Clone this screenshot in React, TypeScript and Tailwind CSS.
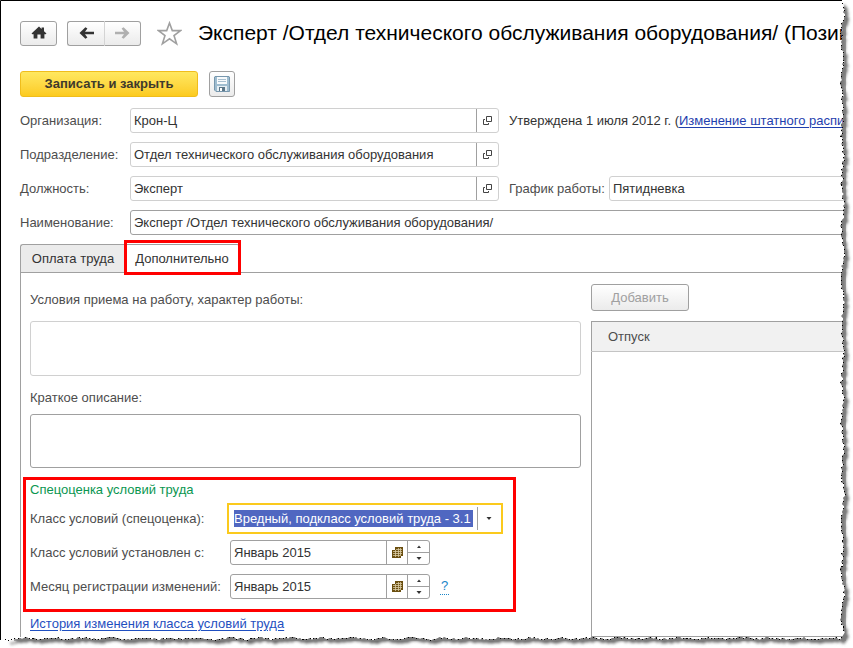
import React, { useState } from "react";

const FIELD = "flex h-[25px] overflow-hidden rounded-[3px] border bg-white";
const INPUT = "h-full w-full min-w-0 flex-1 px-[3px] text-[#333] outline-none";
const GRAY_BUTTON =
  "flex items-center justify-center border border-[#a0a0a0] bg-linear-to-b from-white to-[#ebebeb]";

function HomeIcon() {
  return (
    <svg width="16" height="14" viewBox="0 0 16 14" fill="#333">
      <path d="M8 0.5 L10.6 3 V1.5 H13 V5.2 L15.5 7.6 L14.6 8.3 H13.4 V12.5 H9.6 V8.4 H6.4 V12.5 H2.6 V8.3 H1.4 L0.5 7.6 Z" />
    </svg>
  );
}

function ArrowIcon({ right, color }: { right?: boolean; color: string }) {
  return (
    <svg width="15" height="12" viewBox="0 0 15 12" fill={color}>
      {right ? (
        <path d="M0 4.7 H9 L6.6 1.5 L8.6 0.3 L14.5 6 L8.6 11.7 L6.6 10.5 L9 7.3 H0 Z" />
      ) : (
        <path d="M15 4.7 H6 L8.4 1.5 L6.4 0.3 L0.5 6 L6.4 11.7 L8.4 10.5 L6 7.3 H15 Z" />
      )}
    </svg>
  );
}

function StarIcon() {
  return (
    <svg width="25" height="25" viewBox="0 0 25 25" fill="none" stroke="#a0a0a0" strokeWidth="1.6">
      <path d="M12.5 2 L15.3 9.6 H23.5 L17 14.6 L19.6 22.8 L12.5 17.8 L5.4 22.8 L8 14.6 L1.5 9.6 H9.7 Z" />
    </svg>
  );
}

function SaveIcon() {
  return (
    <svg width="16" height="16" viewBox="0 0 16 16">
      <path d="M1 0.5 H15 L15.5 1 V15.5 H2 L0.5 14 V1 Z" fill="#9fbdd0" stroke="#7797ad" />
      <rect x="3" y="1" width="10" height="7" fill="#f7fafc" />
      <path d="M4 3.5 H12 M4 5.5 H12" stroke="#a9c0d0" />
      <rect x="3" y="10" width="10" height="5" fill="#e6eef3" />
      <rect x="5" y="11" width="6" height="4" fill="#5b7688" />
      <rect x="6" y="12" width="2" height="3" fill="#fff" />
    </svg>
  );
}

function OpenIcon() {
  return (
    <svg width="9" height="9" viewBox="0 0 9 9" fill="none" stroke="#444">
      <path d="M3.5 0.5 H8.5 V5.5 H3.5 Z" />
      <path d="M2 3.5 H0.5 V8.5 H5.5 V7" />
    </svg>
  );
}

function CalendarIcon() {
  return (
    <svg width="11" height="12" viewBox="0 0 11 12">
      <path d="M3 0 H11 V9 H9 V11 H0 V3 H3 Z" fill="#6b4f10" />
      <path
        d="M4 2.5 H10 M1 4.5 H10 M1 6.5 H10 M1 8.5 H8 M3.5 3 V10 M6.5 1 V10 M8.5 1 V9"
        stroke="#d9cba5"
        strokeWidth="0.8"
      />
    </svg>
  );
}

function Triangle({ up }: { up?: boolean }) {
  return (
    <svg width="6" height="3" viewBox="0 0 6 3" fill="#333">
      <path d={up ? "M1 3 L3 0.5 L5 3 Z" : "M0.5 0 L3 3 L5.5 0 Z"} />
    </svg>
  );
}

interface RowProps {
  id: string;
  label: string;
  initial: string;
  children?: React.ReactNode;
}

function LookupRow({ id, label, initial, children }: RowProps) {
  const [value, setValue] = useState(initial);
  return (
    <div className="flex items-center">
      <label htmlFor={id} className="w-[110px] shrink-0">
        {label}
      </label>
      <div className={`${FIELD} min-w-0 flex-[368_1_0%] border-[#d0d0d0]`}>
        <input id={id} className={INPUT} value={value} onChange={(e) => setValue(e.target.value)} />
        <button
          type="button"
          aria-label="Открыть"
          className="flex w-[22px] items-center justify-center border-l border-[#a0a0a0]"
        >
          <OpenIcon />
        </button>
      </div>
      <div className="ml-[10px] flex min-w-0 flex-[345_1_0%] items-center whitespace-nowrap">
        {children}
      </div>
    </div>
  );
}

function MonthRow({ id, label, initial, children }: RowProps) {
  const [value, setValue] = useState(initial);
  return (
    <div className="flex items-center">
      <label htmlFor={id} className="w-[200px] shrink-0">
        {label}
      </label>
      <div className={`${FIELD} w-[200px] border-[#a0a0a0]`}>
        <input id={id} className={INPUT} value={value} onChange={(e) => setValue(e.target.value)} />
        <button
          type="button"
          aria-label="Выбрать месяц"
          className="flex w-[21px] items-center justify-center border-l border-[#a0a0a0]"
        >
          <CalendarIcon />
        </button>
        <div className="flex w-[22px] flex-col border-l border-[#a0a0a0]">
          <button type="button" aria-label="Больше" className="flex flex-1 items-center justify-center">
            <Triangle up />
          </button>
          <button
            type="button"
            aria-label="Меньше"
            className="flex flex-1 items-center justify-center border-t border-[#a0a0a0]"
          >
            <Triangle />
          </button>
        </div>
      </div>
      {children}
    </div>
  );
}

// repeatable noise in 0..1
function noise(n: number) {
  const v = Math.sin(n * 12.9898) * 43758.5453;
  return v - Math.floor(v);
}

// ragged paper edge: right side going down, then the bottom going left
function tornPoints() {
  const points: string[] = [];
  for (let y = 0; y < 636; y += 2) {
    const x = 842.5 + Math.sin(y * 0.13) * 1.2 + (noise(y) - 0.5) * 3;
    points.push(`${Math.round(x)},${y}`);
  }
  for (let x = 840; x > 2; x -= 2) {
    const y = 638.6 + Math.sin(x * 0.21) * 0.8 + (noise(x + 900) - 0.5) * 2.4;
    points.push(`${x},${Math.round(y)}`);
  }
  return points.join(" ");
}

function PaperFrame() {
  const edge = tornPoints();
  const outside = `${edge} 0,640 0,648 853,648 853,0`;
  return (
    <svg
      className="pointer-events-none absolute inset-0 h-full w-full"
      viewBox="0 0 853 648"
      preserveAspectRatio="none"
      aria-hidden="true"
    >
      <defs>
        <clipPath id="outside">
          <polygon points={outside} />
        </clipPath>
        <filter id="soft" x="-5%" y="-5%" width="110%" height="110%">
          <feGaussianBlur stdDeviation="1.6" />
        </filter>
      </defs>
      <polygon points={outside} fill="#fff" />
      <g clipPath="url(#outside)">
        <polygon
          points={`830,11 ${edge} 12,638 12,620 830,620`}
          transform="translate(4 4)"
          fill="#6c6c6c"
          filter="url(#soft)"
        />
        <path d="M842 10 H846 V641 H14 V634 H842 Z" fill="#808080" opacity="0.7" />
      </g>
      <polyline
        points={edge}
        fill="none"
        stroke="#000"
        strokeDasharray="1 3"
        shapeRendering="crispEdges"
      />
      <path d="M0.5 640 V0.5 H842" fill="none" stroke="#000" />
    </svg>
  );
}

export default function App() {
  const [name, setName] = useState("Эксперт /Отдел технического обслуживания оборудования/");
  const [schedule, setSchedule] = useState("Пятидневка");

  return (
    <div className="relative min-h-screen overflow-hidden bg-white pt-5 pl-5 font-['Liberation_Sans',Arial,sans-serif] text-[13px] leading-4 text-[#4d4d4d]">
      <header className="flex h-[26px] items-center">
        <button type="button" aria-label="Домой" className={`${GRAY_BUTTON} h-[25px] w-[37px] shrink-0 rounded-[3px]`}>
          <HomeIcon />
        </button>
        <div className="ml-[10px] flex shrink-0">
          <button type="button" aria-label="Назад" className={`${GRAY_BUTTON} h-[25px] w-[37px] rounded-l-[3px] border-r-0`}>
            <ArrowIcon color="#333" />
          </button>
          <button type="button" aria-label="Вперед" className={`${GRAY_BUTTON} h-[25px] w-[37px] rounded-r-[3px] border-l-[#d4d4d4]`}>
            <ArrowIcon right color="#b0b0b0" />
          </button>
        </div>
        <button type="button" aria-label="В избранное" className="ml-4 shrink-0">
          <StarIcon />
        </button>
        <h1 className="ml-4 text-[21px] leading-6 whitespace-nowrap text-black">
          Эксперт /Отдел технического обслуживания оборудования/ (Позиц
        </h1>
      </header>

      <div className="mt-[25px] flex">
        <button
          type="button"
          className="h-[26px] w-[178px] rounded-[3px] border border-[#f0bd1c] bg-linear-to-b from-[#ffe85f] to-[#fccb1d] font-bold text-[#3f3a2c]"
        >
          Записать и закрыть
        </button>
        <button type="button" aria-label="Записать" className={`${GRAY_BUTTON} ml-[11px] h-[26px] w-[26px] rounded-[3px]`}>
          <SaveIcon />
        </button>
      </div>

      <div className="mt-[11px] flex flex-col gap-[9px]">
        <LookupRow id="org" label="Организация:" initial="Крон-Ц">
          <span className="text-[#333]">
            Утверждена 1 июля 2012 г. (
            <a href="#history" className="text-[#1f3fae] underline underline-offset-2">
              Изменение штатного распи
            </a>
          </span>
        </LookupRow>
        <LookupRow id="dept" label="Подразделение:" initial="Отдел технического обслуживания оборудования" />
        <LookupRow id="post" label="Должность:" initial="Эксперт">
          <label htmlFor="schedule" className="w-[100px] shrink-0">
            График работы:
          </label>
          <div className={`${FIELD} flex-1 border-[#d0d0d0]`}>
            <input id="schedule" className={INPUT} value={schedule} onChange={(e) => setSchedule(e.target.value)} />
          </div>
        </LookupRow>
        <div className="flex items-center">
          <label htmlFor="name" className="w-[110px] shrink-0">
            Наименование:
          </label>
          <div className={`${FIELD} flex-1 border-[#a0a0a0]`}>
            <input id="name" className={INPUT} value={name} onChange={(e) => setName(e.target.value)} />
          </div>
        </div>
      </div>

      <div role="tablist" className="mt-[9px] flex h-[28px] text-[#333]">
        <button type="button" role="tab" className="w-[105px] rounded-tl-[3px] border-t border-l border-[#a0a0a0] bg-[#ebebeb]">
          Оплата труда
        </button>
        <div className="relative">
          <button type="button" role="tab" aria-selected="true" className="h-full w-[115px] rounded-tr-[3px] border-t border-r border-[#a0a0a0]">
            Дополнительно
          </button>
          <div className="pointer-events-none absolute -inset-x-px -top-1 -bottom-[3px] z-10 border-3 border-[#f00]" />
        </div>
      </div>

      <main className="grid grid-cols-[551fr_262fr] gap-[10px] border-t border-l border-[#a0a0a0] pl-[9px]">
        <section className="min-w-0 pb-[5px]">
          <label htmlFor="conditions" className="mt-[19px] block">
            Условия приема на работу, характер работы:
          </label>
          <textarea
            id="conditions"
            className="mt-[13px] block h-[55px] w-full resize-none rounded-[3px] border border-[#d0d0d0] outline-none"
          />
          <label htmlFor="summary" className="mt-[14px] block">
            Краткое описание:
          </label>
          <textarea
            id="summary"
            className="mt-2 block h-[54px] w-full resize-none rounded-[3px] border border-[#a0a0a0] outline-none"
          />

          <div className="mt-[9px] -ml-[7px] w-[493px] border-3 border-[#f00] pt-[2px] pb-[10px] pl-1">
            <h2 className="text-[#0a9650]">Спецоценка условий труда</h2>
            <div className="mt-[5px] flex items-center">
              <label htmlFor="klass" className="w-[197px] shrink-0">
                Класс условий (спецоценка):
              </label>
              <div className="relative h-[31px] w-[276px] border-2 border-[#fbca1d]">
                <select
                  id="klass"
                  className="h-full w-full appearance-none bg-[#5067c1] bg-clip-content py-[5px] pr-[28px] pl-[5px] text-white outline-none"
                >
                  <option>Вредный, подкласс условий труда - 3.1</option>
                </select>
                <span className="pointer-events-none absolute top-[2px] right-0 bottom-[2px] flex w-[24px] items-center justify-center border-l border-[#a0a0a0] pr-[2px]">
                  <Triangle />
                </span>
              </div>
            </div>
            <div className="mt-[6px] flex flex-col gap-[9px]">
              <MonthRow id="since" label="Класс условий установлен с:" initial="Январь 2015" />
              <MonthRow id="registered" label="Месяц регистрации изменений:" initial="Январь 2015">
                <a href="#help" className="ml-[10px] border-b border-dotted border-[#1a86c8] px-px text-[#1a86c8]">
                  ?
                </a>
              </MonthRow>
            </div>
          </div>
          <a href="#class-history" className="mt-1 inline-block text-[#1f4fc0] underline underline-offset-2">
            История изменения класса условий труда
          </a>
        </section>

        <section className="flex min-w-0 flex-col pt-[11px]">
          <button
            type="button"
            disabled
            className={`${GRAY_BUTTON} h-[27px] w-[98px] rounded-[3px] text-[#a0a0a0]`}
          >
            Добавить
          </button>
          <table className="mt-[10px] w-full flex-1 border border-[#a0a0a0]">
            <thead>
              <tr>
                <th className="h-[30px] border-b border-[#c4c4c4] bg-[#f1f1f1] pl-4 text-left font-normal">
                  Отпуск
                </th>
              </tr>
            </thead>
            <tbody>
              <tr>
                <td />
              </tr>
            </tbody>
          </table>
        </section>
      </main>

      <PaperFrame />
    </div>
  );
}
